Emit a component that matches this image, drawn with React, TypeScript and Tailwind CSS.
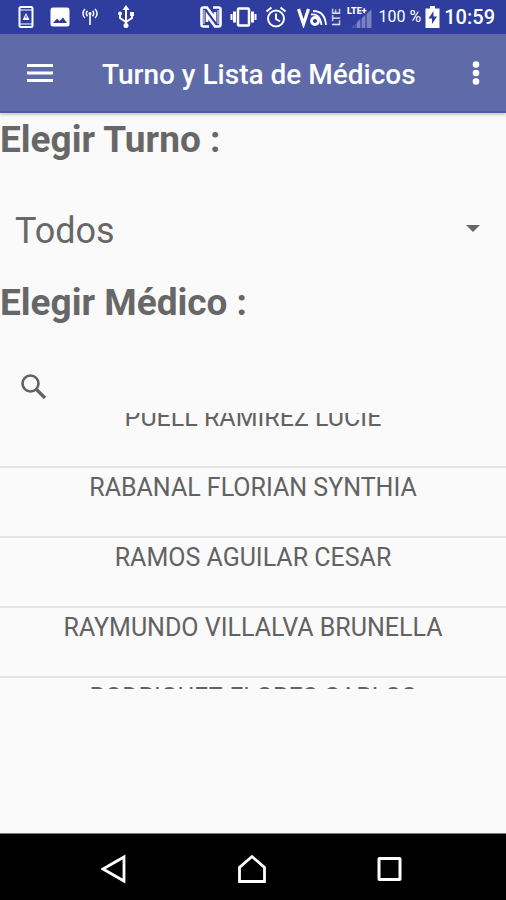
import { useLayoutEffect, useRef } from "react";

const doctors = [
  "PUELL RAMIREZ LUCIE",
  "RABANAL FLORIAN SYNTHIA",
  "RAMOS AGUILAR CESAR",
  "RAYMUNDO VILLALVA BRUNELLA",
  "RODRIGUEZ FLORES CARLOS",
];

function StatusBar() {
  return (
    <div className="flex h-[34px] items-center justify-between bg-[#2f3d9e] pl-[18px] pr-[11px] text-white">
      <div className="flex items-center gap-4">
        <svg className="h-6 w-4" viewBox="0 0 16 24" fill="none" stroke="currentColor" strokeWidth="2">
          <rect x="1.5" y="2" width="13" height="20" rx="1.5" />
          <path d="M2 5h12M2 19h12" strokeWidth="1.2" />
          <path d="M8 8l3.5 7h-7z" fill="currentColor" stroke="none" />
          <path d="M8 10.5v2.5" stroke="#2f3d9e" strokeWidth="1" />
        </svg>
        <svg className="h-5 w-5" viewBox="0 0 20 20">
          <rect x="0.5" y="0.5" width="19" height="19" rx="2.5" fill="currentColor" />
          <path d="M3 16l4-4.500 2.500 2.500 3.500-3.500 4 5.500z" fill="#2f3d9e" />
        </svg>
        <div className="-ml-1 flex items-center gap-5">
          <svg className="h-5 w-4" viewBox="0 0 16 20" fill="none" stroke="currentColor" strokeWidth="1.5">
            <path d="M3 2a6 6 0 0 0 0 9M13 2a6 6 0 0 1 0 9M5.5 3.8a4 4 0 0 0 0 5.4M10.5 3.8a4 4 0 0 1 0 5.4" />
            <circle cx="8" cy="6.5" r="1.5" fill="currentColor" stroke="none" />
            <path d="M8 7v11" strokeWidth="1.6" />
          </svg>
          <svg className="h-6 w-4" viewBox="0 0 16 24" fill="none" stroke="currentColor" strokeWidth="2">
            <path d="M8 4v15M2 9v4l6 4 6-4V9" />
            <path d="M8 0l3.5 5h-7z" fill="currentColor" stroke="none" />
            <circle cx="2" cy="8.5" r="2" fill="currentColor" stroke="none" />
            <path d="M12 7h4v4h-4z" fill="currentColor" stroke="none" />
            <circle cx="8" cy="20.5" r="2.5" fill="currentColor" stroke="none" />
          </svg>
        </div>
      </div>
      <div className="flex items-center">
        <svg className="mr-2 h-[22px] w-[22px]" viewBox="0 0 22 22" fill="none" stroke="currentColor">
          <path d="M9 20.500H3.500q-2 0-2-2v-15q0-2 2-2H7l8 11V6" strokeWidth="2.600" />
          <path d="M13 1.500h5.500q2 0 2 2v15q0 2-2 2H15l-8-11V16" strokeWidth="2.600" />
          <path d="M4 4v14M18 4v14" strokeWidth="1.600" opacity=".6" />
        </svg>
        <svg className="mr-2 h-5 w-[27px]" viewBox="0 0 27 20" fill="none" stroke="currentColor" strokeWidth="2.5">
          <rect x="8" y="1.500" width="11" height="17" rx="1" />
          <path d="M4.500 4.500v11M22.500 4.500v11" strokeWidth="3" />
          <path d="M1.500 7v6M25.500 7v6" strokeWidth="2" />
        </svg>
        <svg className="mr-2 h-[22px] w-[22px]" viewBox="0 0 22 22" fill="none" stroke="currentColor" strokeWidth="2">
          <circle cx="11" cy="12.500" r="8" />
          <path d="M11 7.500v5.500l4 2.500M1.500 5.500l5-4M20.500 5.500l-5-4" />
        </svg>
        <svg className="mr-1 h-[22px] w-[48px]" viewBox="0 0 48 22" fill="none" stroke="currentColor">
          <path d="M3.500 3l5 15 5-15" strokeWidth="3.200" />
          <circle cx="20" cy="15" r="3.500" strokeWidth="2.800" />
          <path d="M16 8.500q9-1.500 10.500 10.500M18 5q12 0 13 14" strokeWidth="1.800" />
          <text transform="translate(45 20) rotate(-90)" fill="currentColor" stroke="none" fontFamily="Roboto, sans-serif" fontSize="11" fontWeight="500" opacity=".85">LTE</text>
        </svg>
        <svg className="mr-1 h-6 w-[28px]" viewBox="0 0 28 24" fill="currentColor">
          <path d="M4 23L25 4v19z" opacity=".15" />
          <path d="M10 17l3-3v9h-3zM15 13l3-3v13h-3zM20 8.500l4-3.500v18h-4z" opacity=".25" />
          <text x="0" y="9" fontFamily="Roboto, sans-serif" fontSize="9" fontWeight="900">LTE+</text>
        </svg>
        <span className="mr-1 whitespace-nowrap font-[Roboto] text-base leading-5">100 %</span>
        <svg className="mr-1 h-[22px] w-[15px]" viewBox="0 0 15 22">
          <path d="M5 0h5v2.500h4.500V22H.5V2.500H5z" fill="currentColor" />
          <path d="M8.500 5l-5 7.500h3.500V18l5-7.500H8.500z" fill="#2f3d9e" />
        </svg>
        <span className="font-[Roboto] text-xl font-medium leading-6">10:59</span>
      </div>
    </div>
  );
}

function DoctorList() {
  const listRef = useRef<HTMLUListElement>(null);

  useLayoutEffect(() => {
    if (listRef.current) listRef.current.scrollTop = 15;
  }, []);

  return (
    <ul ref={listRef} className="h-[276px] overflow-y-auto [scrollbar-width:none]">
      {doctors.map((name) => (
        <li key={name} className="h-[70px] border-b-2 border-[#e4e4e4] pt-[5px] text-center text-[25px] leading-[30px] text-[#626262]">
          {name}
        </li>
      ))}
    </ul>
  );
}

export default function App() {
  return (
    <div className="flex min-h-screen flex-col bg-[#fafafa] font-[Roboto,sans-serif] text-[#676767]">
      <StatusBar />
      <header className="flex h-[79px] items-center border-b-2 border-[#4c5aaa] bg-[#5f6ba9] pl-[26px] pr-4 text-white shadow-[0_2px_3px_rgba(0,0,0,0.2)]">
        <button type="button" aria-label="Menú" className="flex">
          <svg className="h-5 w-7" viewBox="0 0 28 20" stroke="currentColor" strokeWidth="3">
            <path d="M1 2.500h26M1 10h26M1 17.500h26" />
          </svg>
        </button>
        <h1 className="ml-12 flex-1 whitespace-nowrap pt-1 text-[28px] font-medium leading-8">Turno y Lista de Médicos</h1>
        <button type="button" aria-label="Más opciones" className="flex w-7 justify-center">
          <svg className="h-6 w-2" viewBox="0 0 8 24" fill="currentColor">
            <circle cx="4" cy="3.500" r="3.300" />
            <circle cx="4" cy="12" r="3.300" />
            <circle cx="4" cy="20.500" r="3.300" />
          </svg>
        </button>
      </header>
      <main className="flex-1">
        <label htmlFor="turno" className="block pt-[5px] text-[37px] font-bold leading-[44px]">Elegir Turno :</label>
        <div className="relative mt-[39px] flex h-[60px] items-center">
          <select id="turno" className="h-full w-full appearance-none bg-transparent px-[15px] text-4xl outline-none">
            <option>Todos</option>
          </select>
          <svg className="pointer-events-none absolute right-[26px] top-6 h-[7px] w-[14px]" viewBox="0 0 14 7" fill="#676767">
            <path d="M0 0h14L7 7z" />
          </svg>
        </div>
        <h2 className="mt-5 text-[37px] font-bold leading-[44px]">Elegir Médico :</h2>
        <div className="mt-9 flex h-[52px] items-center gap-4 px-5">
          <label htmlFor="buscar" aria-label="Buscar médico">
            <svg className="h-[27px] w-[27px]" viewBox="0 0 27 27" fill="none" stroke="#626262" strokeWidth="2.600">
              <circle cx="10.500" cy="9.500" r="8" />
              <path d="M16.500 15.500l8.500 8.500" strokeWidth="3.200" />
            </svg>
          </label>
          <input id="buscar" type="search" className="h-full min-w-0 flex-1 bg-transparent text-2xl outline-none" />
        </div>
        <DoctorList />
      </main>
      <nav className="flex h-[67px] items-center justify-between border-t border-[#777] bg-black px-[101px] pt-1 text-white">
        <button type="button" aria-label="Atrás">
          <svg className="h-[30px] w-[26px]" viewBox="0 0 26 30" fill="none" stroke="currentColor" strokeWidth="2.800">
            <path d="M23 3v24L2 15z" />
          </svg>
        </button>
        <button type="button" aria-label="Inicio">
          <svg className="h-[30px] w-[30px]" viewBox="0 0 30 30" fill="none" stroke="currentColor" strokeWidth="2.800">
            <path d="M2.500 27.500V13.500L15 2.500l12.500 11v14z" />
          </svg>
        </button>
        <button type="button" aria-label="Recientes">
          <svg className="h-[26px] w-7" viewBox="0 0 28 26" fill="none" stroke="currentColor" strokeWidth="3">
            <rect x="2" y="2.500" width="21" height="21" rx="0.500" />
          </svg>
        </button>
      </nav>
    </div>
  );
}
